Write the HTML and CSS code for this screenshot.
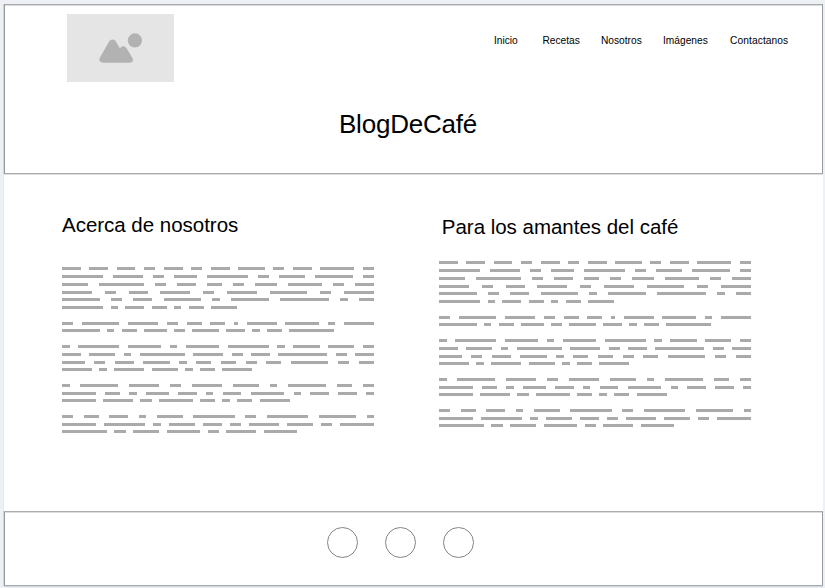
FILE: index.html
```html
<!DOCTYPE html>
<html lang="es">
<head>
<meta charset="utf-8">
<title>BlogDeCafé</title>
<link rel="stylesheet" href="styles.css">
</head>
<body>
<div class="page">
  <header class="header">
    <div class="topbar">
      <svg class="logo" viewBox="0 0 107 68" aria-hidden="true">
        <rect width="107" height="68" fill="#e5e5e5"/>
        <circle cx="67.9" cy="26.4" r="7.1" fill="#b2b2b2"/>
        <path d="M33 43.6 41.5 28.4C43.6 24.6 47.4 24.6 49.5 28.4L53 34.4C54.6 31.4 58 31.6 59.6 34.3L65.1 43.6C66.8 46.4 65.8 48.7 62.7 48.7H36.8C32.9 48.7 31.4 46.5 33 43.6Z" fill="#b2b2b2"/>
      </svg>
      <nav class="nav">
        <a>Inicio</a><a>Recetas</a><a>Nosotros</a><a>Imágenes</a><a>Contactanos</a>
      </nav>
    </div>
    <h1 class="title">BlogDeCafé</h1>
  </header>
  <main class="main">
    <section class="column about">
      <h2>Acerca de nosotros</h2>
      <div class="copy"></div>
    </section>
    <section class="column fans">
      <h2>Para los amantes del café</h2>
      <div class="copy"></div>
    </section>
  </main>
  <footer class="footer">
    <span class="circle"></span><span class="circle"></span><span class="circle"></span>
  </footer>
</div>
<script src="copy.js"></script>
</body>
</html>
```

FILE: styles.css
```css
* { box-sizing: border-box; }
body {
  margin: 0;
  height: 588px;
  overflow: hidden;
  background: #edf1f6;
  color: #000;
  font-family: "Liberation Sans", Arial, sans-serif;
}
.page {
  display: flex;
  flex-direction: column;
  width: 819px;
  height: 582px;
  margin: 4px 0 0 4px;
  background: #fff;
  box-shadow: -1px 0 #e4e8eb, 0 1px #dce0e3;
}
.header {
  height: 170px;
  border: 1px solid #a9abad;
  border-left-color: #989b9d;
  border-right-color: #989b9d;
  box-shadow: inset 0 1px #dadada, 0 1px #dedede, -1px 0 #d2d5d8;
}
.topbar {
  display: flex;
  justify-content: space-between;
  align-items: flex-start;
  padding: 9px 34px 0 62px;
}
.logo { display: block; width: 107px; height: 68px; }
.nav {
  display: grid;
  grid-template-columns: 48.5px 58.5px 62px 67px 58px;
  padding-top: 20px;
  font-size: 10.2px;
  line-height: 13px;
}
.nav a:last-child { letter-spacing: 0.1px; }
.title {
  margin: 26px 0 0 334px;
  font-size: 26px;
  font-weight: 400;
  line-height: 32px;
  letter-spacing: -0.22px;
}
.main {
  display: flex;
  gap: 65px;
  height: 337px;
  padding-left: 58px;
}
.column { width: 312px; }
.column h2 {
  margin: 0;
  font-size: 20.5px;
  font-weight: 400;
  line-height: 24px;
  white-space: nowrap;
  letter-spacing: -0.02px;
}
.about { padding-top: 39px; }
.about .copy { margin-top: 30px; }
.fans { padding-top: 41px; }
.fans h2 { padding-left: 2.8px; }
.fans .copy { margin-top: 22px; }
.copy { display: flex; flex-direction: column; gap: 13px; }
.line { display: flex; justify-content: space-between; height: 3px; }
.line + .line { margin-top: 5px; }
.line + .line.tight { margin-top: 4px; }
.line.last { justify-content: flex-start; gap: 7.35px; }
.word { height: 3px; background: #aaa; }
.footer {
  display: flex;
  justify-content: center;
  gap: 27px;
  height: 75px;
  padding: 15px 26px 0 0;
  border: 1px solid #a9adaf;
  border-left-color: #989b9d;
  border-right-color: #989b9d;
  box-shadow: inset 0 1px #dedede, 0 1px #cfd5d8, -1px 0 #d2d5d8;
}
.circle { width: 31px; height: 31px; border: 1px solid #858585; border-radius: 50%; }
```

FILE: copy.js
```js
// Word lengths of the placeholder copy, one array of lines per paragraph.
const paragraphs = [
  ["5 5 5 3 5 3 5 7 3 5 9 3", "11 8 3 6 11 3 7 10 3", "7 12 3 5 4 3 6 9 3 5",
   "8 3 5 8 3 8 10 3 8", "10 3 5 10 2 10 13 2 4", "11 2 5 4 2 4 7"],
  ["3 10 8 3 4 4 1 8 9 2 8", "10 2 4 6 3 7 5 2 4 12"],
  ["2 11 9 2 9 11 2 7 7 3", "5 7 2 12 8 3 5 13 3 5", "6 3 5 7 2 4 4 3 4 10 3 4", "8 2 8 7 2 4 8"],
  ["2 10 8 3 8 7 2 10 4 3", "9 4 2 6 5 2 5 9 2 5 5 2", "9 8 3 9 4 2 4 8"],
  ["3 4 5 2 7 11 3 11 10 2", "9 11 2 7 5 3 8 7 3 9", "12 3 7 9 3 8 9"]
];
const charWidth = 3.75;

document.querySelectorAll(".copy").forEach(copy => {
  paragraphs.forEach((lines, p) => {
    const block = document.createElement("div");
    lines.forEach((text, i) => {
      const line = document.createElement("div");
      line.className = "line";
      if (i === lines.length - 1) line.classList.add("last");
      if (i === (p === 0 ? 4 : lines.length - 1)) line.classList.add("tight");
      text.split(" ").forEach(n => {
        const word = document.createElement("span");
        word.className = "word";
        word.style.width = n * charWidth + "px";
        line.append(word);
      });
      block.append(line);
    });
    copy.append(block);
  });
});
```
